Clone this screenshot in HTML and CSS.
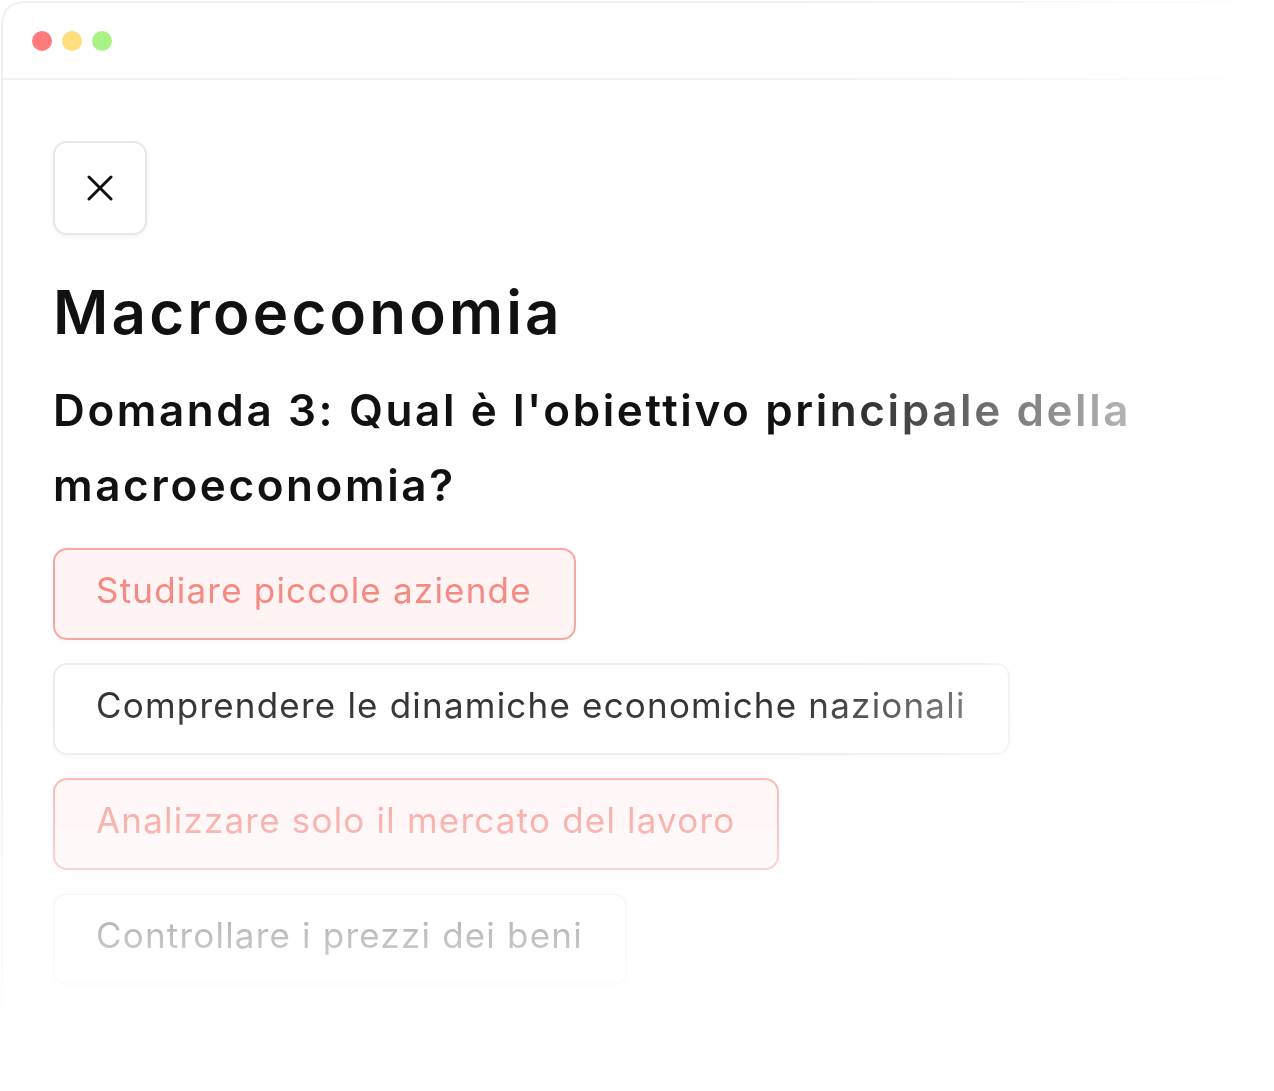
FILE: index.html
```html
<!DOCTYPE html>
<html lang="it">
<head>
    <meta charset="UTF-8">
    <meta name="viewport" content="width=device-width, initial-scale=1.0">
    <title>Macroeconomia - Quiz</title>
    <link rel="stylesheet" href="styles.css">
</head>
<body>
    <div class="window">
        <div class="titlebar">
            <span class="dot dot-red"></span>
            <span class="dot dot-yellow"></span>
            <span class="dot dot-green"></span>
        </div>

        <div class="quiz">
            <button class="close-btn" aria-label="Chiudi">
                <svg width="26" height="26" viewBox="0 0 26 26" fill="none" stroke="#111" stroke-width="3" stroke-linecap="round">
                    <path d="M2 2l22 22M24 2L2 24"/>
                </svg>
            </button>

            <h1 class="quiz-title">Macroeconomia</h1>
            <h2 class="question">Domanda 3: Qual è l'obiettivo principale della macroeconomia?</h2>

            <div class="options">
                <div class="option option-wrong">Studiare piccole aziende</div>
                <div class="option">Comprendere le dinamiche economiche nazionali</div>
                <div class="option option-wrong">Analizzare solo il mercato del lavoro</div>
                <div class="option">Controllare i prezzi dei beni</div>
            </div>
        </div>
    </div>
</body>
</html>
```

FILE: styles.css
```css
body {
    margin: 0;
    background: #fff;
    font-family: Inter, "Noto Sans", sans-serif;
    color: #111;
    overflow: hidden;
}
.window {
    margin: 1px 0 0 1px;
    height: calc(100vh - 3px);
    overflow: hidden;
    border: 2px solid #efefef;
    border-right: none;
    border-bottom: none;
    border-top-left-radius: 22px;
    -webkit-mask-image: linear-gradient(to right, #000 800px, transparent 1274px), linear-gradient(to bottom, #000 700px, transparent 1040px);
    -webkit-mask-composite: source-in;
    mask-image: linear-gradient(to right, #000 800px, transparent 1274px), linear-gradient(to bottom, #000 700px, transparent 1040px);
    mask-composite: intersect;
}
.titlebar {
    display: flex;
    align-items: center;
    gap: 10px;
    height: 75px;
    padding-left: 29px;
    border-bottom: 2px solid #f1f1f1;
}
.dot {
    width: 20px;
    height: 20px;
    border-radius: 50%;
}
.dot-red { background: #ff7c7c; }
.dot-yellow { background: #ffde7e; }
.dot-green { background: #a9f286; }
.quiz {
    padding: 61px 0 0 50px;
}
.close-btn {
    display: flex;
    align-items: center;
    justify-content: center;
    width: 94px;
    height: 94px;
    padding: 0;
    background: #fff;
    border: 2px solid #e8e8e8;
    border-radius: 14px;
    box-shadow: 0 2px 4px rgba(0,0,0,0.05);
    cursor: pointer;
}
.quiz-title {
    margin: 37px 0 0;
    font-size: 60px;
    font-weight: 600;
    line-height: 80px;
    letter-spacing: 3.2px;
}
.question {
    margin: 21px 0 0;
    max-width: 1110px;
    font-size: 44px;
    font-weight: 600;
    line-height: 75px;
    letter-spacing: 2.6px;
}
.options {
    display: flex;
    flex-direction: column;
    align-items: flex-start;
    gap: 23px;
    margin-top: 25px;
}
.option {
    padding: 0 42px 8px 41px;
    height: 80px;
    line-height: 80px;
    font-size: 35px;
    letter-spacing: 1.2px;
    color: #333;
    background: #fff;
    border: 2px solid #ececec;
    border-radius: 14px;
    box-shadow: 0 2px 4px rgba(0,0,0,0.03);
}
.option-wrong {
    color: #f48a82;
    background: #fff3f3;
    border-color: #f7a8a3;
}
```
